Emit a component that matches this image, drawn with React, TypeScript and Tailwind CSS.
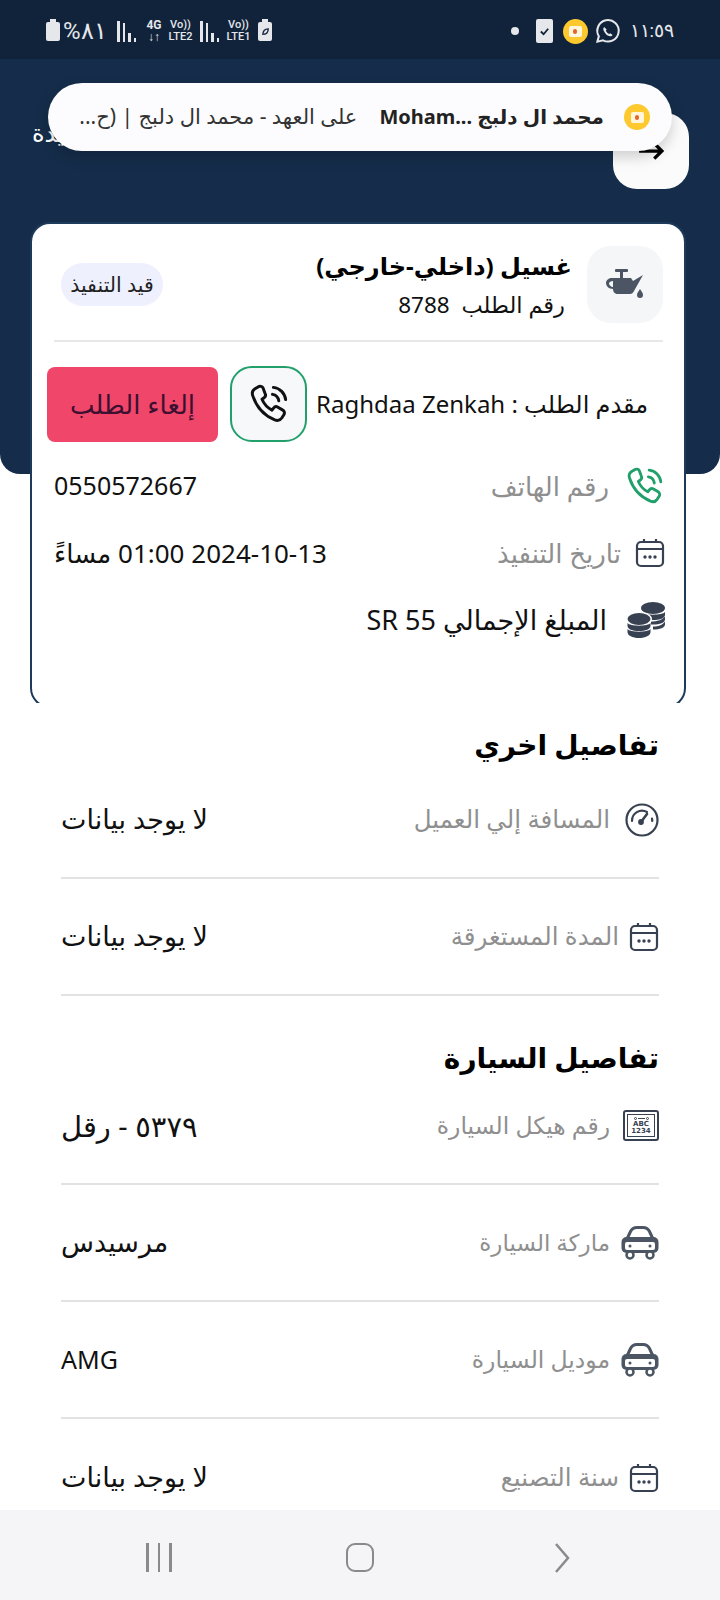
import React from "react";

const arabic = "font-['Noto_Sans','DejaVu_Sans',sans-serif]";

function Calendar({ className = "w-[30px] h-[30px]" }: { className?: string }) {
  return (
    <svg viewBox="0 0 30 30" className={className} fill="none" stroke="#374151" strokeWidth="2.2">
      <rect x="2" y="4" width="26" height="24" rx="4" />
      <path d="M2 11h26M9 1v4M21 1v4" />
      <g fill="#374151" stroke="none">
        <circle cx="10" cy="19" r="1.7" />
        <circle cx="15" cy="19" r="1.7" />
        <circle cx="20" cy="19" r="1.7" />
      </g>
    </svg>
  );
}

function PhoneWaves({ color, size }: { color: string; size: number }) {
  return (
    <svg viewBox="0 0 24 24" width={size} height={size} fill="none" stroke={color} strokeWidth="1.7" strokeLinecap="round" strokeLinejoin="round">
      <path d="M8.6 2.8c-.5-.9-1.7-1.2-2.6-.7L4 3.3C2.7 4.1 2.2 5.7 2.7 7.2c2 6.200 6.500 11.300 12.600 13.900 1.500.6 3.100.2 4-1.100l1.200-1.900c.6-.9.300-2.100-.6-2.600l-2.800-1.700c-.8-.5-1.900-.3-2.500.5l-.9 1.200c-2.500-1.300-4.600-3.600-5.700-6.200l1.200-.9c.8-.6 1-1.700.5-2.500z" />
      <path d="M14 6.500c1.900.3 3.300 1.800 3.600 3.700M14.500 2.500c3.700.4 6.600 3.300 7 7" />
    </svg>
  );
}

function Gauge() {
  return (
    <svg viewBox="0 0 34 34" className="w-[34px] h-[34px]" fill="none" stroke="#374151" strokeWidth="2.2" strokeLinecap="round">
      <circle cx="17" cy="17" r="15.500" />
      <path d="M7 18a10 10 0 0 1 15-9M27 15.500l.3 2.500" />
      <path d="M16 19l6-8" strokeWidth="2.600" />
      <circle cx="16" cy="19" r="1.800" fill="#374151" />
    </svg>
  );
}

function Car() {
  return (
    <svg viewBox="0 0 38 34" className="w-[38px] h-[34px]" fill="none">
      <path d="M6 13l3.500-7.500C11 2.500 13 1.500 16 1.500h6c3 0 5 1 6.500 4L32 13" stroke="#4b5563" strokeWidth="3" />
      <rect x="0.500" y="11" width="37" height="16" rx="5" fill="#4b5563" />
      <rect x="4" y="16" width="30" height="8" rx="2" fill="#fff" />
      <circle cx="9" cy="20" r="1.500" fill="#4b5563" />
      <circle cx="29" cy="20" r="1.500" fill="#4b5563" />
      <circle cx="9" cy="29" r="3.500" stroke="#4b5563" strokeWidth="2.500" fill="#fff" />
      <circle cx="29" cy="29" r="3.500" stroke="#4b5563" strokeWidth="2.500" fill="#fff" />
    </svg>
  );
}

function Plate() {
  return (
    <div className="w-[36px] h-[31px] border-2 border-[#374151] rounded-[3px] p-[2px] shrink-0">
      <div className="w-full h-full border border-[#374151] flex flex-col items-center justify-center font-['DejaVu_Sans',sans-serif] text-[7px] leading-[7px] font-bold text-[#374151]" dir="ltr">
        <span className="flex items-center gap-[1px] h-[5px]">
          <span className="w-[3px] h-[3px] rounded-full border border-[#374151]" />
          <span className="w-[7px] h-[1px] bg-[#374151]" />
          <span className="w-[3px] h-[3px] rounded-full border border-[#374151]" />
        </span>
        <span>ABC</span>
        <span>1234</span>
      </div>
    </div>
  );
}

function Coins() {
  return (
    <svg viewBox="0 0 38 36" className="w-[38px] h-[36px]" fill="#374151">
      <ellipse cx="26" cy="6" rx="12" ry="6" />
      <path d="M14 10c2 3.500 22 3.500 24 0v3c0 3-5 5-12 5s-12-2-12-5z" />
      <path d="M24 19.500c6 0 12-2 14-5v3c0 3-5 5-12 5h-2z" />
      <path d="M26 24.500c6 0 10-2 12-5v3c0 3-5 5-12 5z" />
      <ellipse cx="12" cy="17" rx="13" ry="7" fill="#fff" />
      <ellipse cx="12" cy="17" rx="11.500" ry="6" />
      <path d="M0.500 21c2 3.500 21 3.500 23 0v3c0 3-5 5-11.500 5S0.500 27 0.500 24z" />
      <path d="M0.500 27c2 3.500 21 3.500 23 0v3c0 3.500-5 6-11.500 6S0.500 33.500 0.500 30z" />
    </svg>
  );
}

function OilCan() {
  return (
    <svg viewBox="0 0 38 34" className="w-[38px] h-[34px]" fill="#4b5563">
      <rect x="9" y="1" width="13" height="3" rx="1" />
      <rect x="14" y="4" width="3" height="6" />
      <path d="M6 10h19l2 3 10-6-9 16c-1 2-2 3-4 3H12c-3 0-5-2-5-5-4 0-7-3-7-6s3-5 6-5zm1 3c-2 0-4 1-4 2.500S5 19 7 19z" fillRule="evenodd" />
      <path d="M34 21c2 3 3 4 3 6a3 3 0 0 1-6 0c0-2 1-3 3-6z" />
    </svg>
  );
}

function Signal({ className = "" }: { className?: string }) {
  return (
    <span className={`flex items-end gap-[3px] h-[21px] ${className}`}>
      <i className="w-[2.500px] h-[21px] bg-[#e5e7eb]" />
      <i className="w-[2.500px] h-[19px] bg-[#e5e7eb]" />
      <i className="w-[2.500px] h-[9px] bg-[#e5e7eb]" />
      <i className="w-[2.500px] h-[4px] bg-[#e5e7eb]" />
    </span>
  );
}

function Volte({ label, className = "" }: { label: string; className?: string }) {
  return (
    <span className={`flex flex-col items-center font-['Roboto',sans-serif] text-[11px] leading-[12px] font-medium text-[#e5e7eb] ${className}`}>
      <span>Vo))</span>
      <span>{label}</span>
    </span>
  );
}

function AppBadge({ className }: { className: string }) {
  return (
    <span className={`flex items-center justify-center rounded-full bg-[#fdc92f] ${className}`}>
      <span className="w-[13px] h-[11px] rounded-[2px] bg-[#fff6dd] flex items-center justify-center">
        <span className="w-[4px] h-[5px] bg-[#e2662b] rounded-full" />
      </span>
    </span>
  );
}

function StatusBar() {
  return (
    <div dir="ltr" className="h-[59px] bg-[#11233a] flex items-center justify-between pl-[46px] pr-[46px] pt-[3px] shrink-0 text-[#e5e7eb]">
      <div className="flex items-center">
        <span className="relative w-[14px] h-[19px] bg-[#e5e7eb] rounded-[2px]">
          <i className="absolute -top-[3px] left-[4px] w-[6px] h-[3px] bg-[#e5e7eb]" />
        </span>
        <span className="ml-[3px] w-[44px] text-[24px] leading-none font-['Roboto',sans-serif] whitespace-nowrap">%٨١</span>
        <Signal className="ml-[10px]" />
        <span className="w-[18px] ml-[9px] flex flex-col items-center font-['Roboto',sans-serif] text-[12px] leading-[12px] font-bold">
          <span>4G</span>
          <span>↓↑</span>
        </span>
        <Volte label="LTE2" className="w-[25px] ml-[5px]" />
        <Signal className="ml-[7px]" />
        <Volte label="LTE1" className="w-[25px] ml-[7px]" />
        <span className="relative w-[14px] h-[19px] bg-[#e5e7eb] rounded-[2px] ml-[7px] flex items-center justify-center">
          <i className="absolute -top-[3px] left-[4px] w-[6px] h-[3px] bg-[#e5e7eb]" />
          <svg viewBox="0 0 10 10" className="w-[9px] h-[9px]" fill="none" stroke="#11233a" strokeWidth="1.500"><path d="M2 9c0-4 2-7 6-7 0 4-2 6-5 6" /></svg>
        </span>
      </div>
      <div className="flex items-center">
        <span className="w-[8px] h-[8px] rounded-full bg-[#e5e7eb]" />
        <span className="ml-[17px] w-[17px] h-[24px] bg-[#e5e7eb] rounded-[2px] flex items-center justify-center">
          <svg viewBox="0 0 12 12" className="w-[11px] h-[11px]" fill="none" stroke="#11233a" strokeWidth="2"><path d="M2 6l3 3 5-6" /></svg>
        </span>
        <AppBadge className="ml-[10px] w-[25px] h-[25px]" />
        <svg viewBox="0 0 24 24" className="ml-[6px] w-[27px] h-[27px]" fill="none" stroke="#e5e7eb" strokeWidth="1.800">
          <path d="M3 21l1.300-4.700A9.500 9.500 0 1 1 8 19.800z" />
          <path d="M9 8c-1 1-1 2.500 0 4 1 2 2.500 3.500 4.500 4 1.500.4 2.500 0 3-1l-2-1.500-1 .8c-1.200-.5-2.300-1.600-3-3l.8-1z" fill="#e5e7eb" stroke="none" />
        </svg>
        <span className="ml-[9px] text-[18.500px] leading-none font-['Roboto',sans-serif]">١١:٥٩</span>
      </div>
    </div>
  );
}

function InfoRow({
  icon,
  label,
  value,
  gap = "gap-[10px]",
  size = "text-[27px]",
  labelSize = "text-[24.500px]",
}: {
  icon: React.ReactNode;
  label: string;
  value: string;
  gap?: string;
  size?: string;
  labelSize?: string;
}) {
  return (
    <div className="flex items-center justify-between h-[117px] border-b-2 border-[#e2e2e2] last:border-b-0">
      <div className={`flex items-center ${gap}`}>
        {icon}
        <span className={`${labelSize} text-[#8f8f8f]`}>{label}</span>
      </div>
      <span className={`${size} text-[#111]`}>{value}</span>
    </div>
  );
}

export default function App() {
  return (
    <div dir="rtl" className={`relative w-[720px] h-[1600px] overflow-hidden bg-white flex flex-col ${arabic}`}>
      <StatusBar />

      {/* header */}
      <div className="h-[415px] bg-[#152d4a] rounded-b-[20px] shrink-0 pt-[54px] pr-[31px]">
        <div className="flex items-start">
          <button className="w-[76px] h-[76px] bg-[#fbfbfb] rounded-[24px] flex items-center justify-center shrink-0">
            <svg viewBox="0 0 24 24" className="w-[26px] h-[26px]" fill="none" stroke="#000" strokeWidth="3"><path d="M1 12h20M15 5l7 7-7 7" /></svg>
          </button>
          <span className="flex-1 text-left pl-[32px] text-[24px] text-white mt-[2px] whitespace-nowrap">تفاصيل الطلبات الجديدة</span>
        </div>
      </div>

      {/* order card, cut off by the section below */}
      <div className="mt-[-252px] h-[481px] ml-[30px] mr-[34px] overflow-hidden shrink-0 relative">
        <div className="h-[486px] bg-white border-2 border-[#1e3a5a] rounded-[20px] px-[15px] pt-[22px]">
          <div className="flex items-center pb-[17px] border-b-2 border-[#e8e8e8] ml-[7px] mr-[6px]">
            <div className="w-[76px] h-[77px] rounded-[24px] bg-[#f5f6f8] flex items-center justify-center shrink-0">
              <OilCan />
            </div>
            <div className="mr-[15px] flex-1">
              <div className="text-[24px] leading-[40px] font-bold text-black whitespace-nowrap">غسيل (داخلي-خارجي)</div>
              <div className="text-[22.500px] leading-[37px] text-[#111] pr-[7px] whitespace-nowrap">رقم الطلب&nbsp; 8788</div>
            </div>
            <span className="w-[102px] h-[43px] ml-[7px] rounded-full bg-[#eef1fd] text-[20.500px] text-[#222] flex items-center justify-center shrink-0 whitespace-nowrap">قيد التنفيذ</span>
          </div>

          <div className="flex items-center mt-[24px]">
            <span className="flex-1 text-[24px] text-[#111] pr-[21px] whitespace-nowrap">مقدم الطلب : Raghdaa Zenkah</span>
            <button className="w-[77px] h-[76px] border-2 border-[#22a06b] rounded-[22px] bg-[#f6f8fa] flex items-center justify-center shrink-0">
              <PhoneWaves color="#111" size={42} />
            </button>
            <button className="w-[171px] h-[75px] mr-[12px] rounded-[8px] bg-[#f0466a] text-[26px] text-[#3b1030] shrink-0 whitespace-nowrap">إلغاء الطلب</button>
          </div>

          <div className="flex items-center justify-between mt-[14px] h-[60px] ml-[7px] mr-[4px]">
            <div className="flex items-center gap-[16px]">
              <PhoneWaves color="#22a06b" size={40} />
              <span className="text-[26px] text-[#8f8f8f]">رقم الهاتف</span>
            </div>
            <span className="text-[25px] text-[#111]">0550572667</span>
          </div>
          <div className="flex items-center justify-between mt-[7px] h-[60px] ml-[7px] mr-[4px]">
            <div className="flex items-center gap-[14px]">
              <Calendar />
              <span className="text-[26px] text-[#8f8f8f]">تاريخ التنفيذ</span>
            </div>
            <span className="text-[26px] text-[#111]">2024-10-13 01:00 مساءً</span>
          </div>
          <div className="flex items-center gap-[20px] mt-[7px] h-[60px] ml-[7px] mr-[4px]">
            <Coins />
            <span className="text-[27px] text-[#111]">المبلغ الإجمالي 55 SR</span>
          </div>
        </div>
      </div>

      {/* details */}
      <div className="px-[61px] pt-[23px] flex-1 min-h-0">
        <h2 className="text-[28px] leading-[36px] font-bold text-black">تفاصيل اخري</h2>
        <InfoRow icon={<Gauge />} gap="gap-[15px]" label="المسافة إلي العميل" value="لا يوجد بيانات" />
        <InfoRow icon={<Calendar />} label="المدة المستغرقة" value="لا يوجد بيانات" />
        <h2 className="text-[28px] leading-[36px] font-bold text-black mt-[43px] mb-[-7px]">تفاصيل السيارة</h2>
        <InfoRow icon={<Plate />} gap="gap-[13px]" size="text-[29px]" labelSize="text-[23.500px]" label="رقم هيكل السيارة" value="٥٣٧٩ - رقل" />
        <InfoRow icon={<Car />} gap="gap-[11px]" labelSize="text-[23px]" label="ماركة السيارة" value="مرسيدس" />
        <InfoRow icon={<Car />} gap="gap-[11px]" size="text-[25px]" labelSize="text-[23.500px]" label="موديل السيارة" value="AMG" />
        <InfoRow icon={<Calendar />} label="سنة التصنيع" value="لا يوجد بيانات" />
      </div>

      {/* android nav */}
      <div dir="ltr" className="absolute bottom-0 inset-x-0 h-[90px] bg-[#f5f5f7] flex items-center justify-between pl-[146px] pr-[150px] pt-[5px]">
        <span className="flex gap-[9px]">
          <i className="w-[2.500px] h-[29px] bg-[#8a8a8a]" />
          <i className="w-[2.500px] h-[29px] bg-[#8a8a8a]" />
          <i className="w-[2.500px] h-[29px] bg-[#8a8a8a]" />
        </span>
        <span className="w-[28px] h-[29px] border-[2.500px] border-[#8a8a8a] rounded-[9px] ml-[-6px]" />
        <svg viewBox="0 0 16 30" className="w-[16px] h-[30px]" fill="none" stroke="#8a8a8a" strokeWidth="2.500"><path d="M2 1l12 14L2 29" /></svg>
      </div>

      {/* notification pill */}
      <div className="absolute left-[48px] top-[83px] w-[624px] h-[68px] bg-[#fcfcfe] rounded-full shadow-[0_6px_14px_rgba(0,0,0,0.18)] flex items-center pr-[22px] pl-[30px] whitespace-nowrap overflow-hidden">
        <AppBadge className="w-[26px] h-[26px] shrink-0" />
        <span className="mr-[20px] text-[20px] font-bold text-[#222]">محمد ال دلبج ...Moham</span>
        <span className="mr-[22px] text-[21px] text-[#333]">على العهد - محمد ال دلبج | (ح...</span>
      </div>
    </div>
  );
}
